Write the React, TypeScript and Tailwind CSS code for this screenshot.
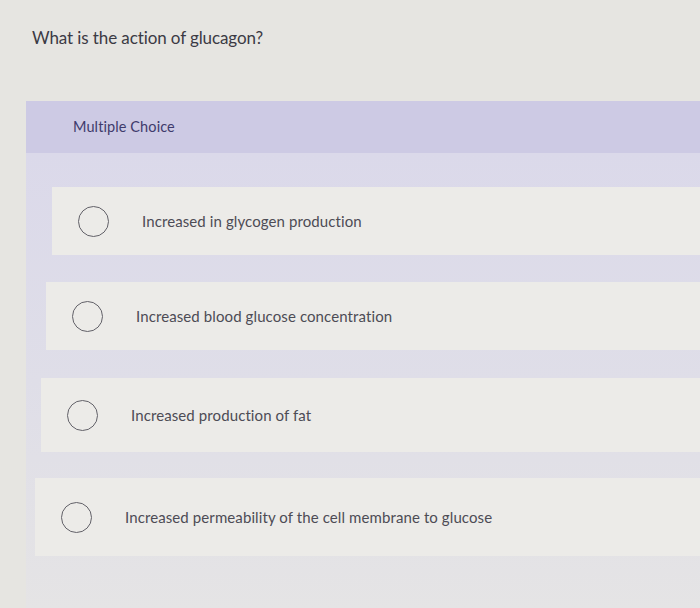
import React from "react";

const options = [
  { text: "Increased in glycogen production", ml: "ml-[26px]", h: "h-[68px]" },
  { text: "Increased blood glucose concentration", ml: "ml-[20px]", h: "h-[68px]" },
  { text: "Increased production of fat", ml: "ml-[15px]", h: "h-[74px]" },
  { text: "Increased permeability of the cell membrane to glucose", ml: "ml-[9px]", h: "h-[78px]" },
];

const gaps = ["h-[27px]", "h-[28px]", "h-[26px]"];

export default function App() {
  return (
    <div className="min-h-[608px] w-[700px] overflow-hidden bg-[#e6e5e1] font-['Lato',sans-serif]">
      <div className="pl-[32px] pt-[27px] text-[17px] leading-[22px] tracking-[-0.1px] text-[#3b3a44]">
        What is the action of glucagon?
      </div>
      <div className="mt-[52px] ml-[26px]">
        <div className="flex h-[52px] items-center bg-[#cdcae4] pl-[47px] text-[14.5px] tracking-[0.1px] text-[#3f3b6c]">
          Multiple Choice
        </div>
        <div className="bg-gradient-to-b from-[#dbd9ea] via-[#dfdee8] to-[#e5e4e5] pt-[34px] pb-[52px]">
          {options.map((o, i) => (
            <React.Fragment key={i}>
              <div
                className={`flex items-center ${o.ml} ${o.h} bg-[#ecebe8] pl-[26px]`}
              >
                <div className="h-[31px] w-[31px] shrink-0 rounded-full border-[1.5px] border-[#626168]" />
                <div className="ml-[33px] text-[15px] tracking-[0.1px] text-[#4d4c55]">{o.text}</div>
              </div>
              {i < gaps.length && <div className={gaps[i]} />}
            </React.Fragment>
          ))}
        </div>
      </div>
    </div>
  );
}
